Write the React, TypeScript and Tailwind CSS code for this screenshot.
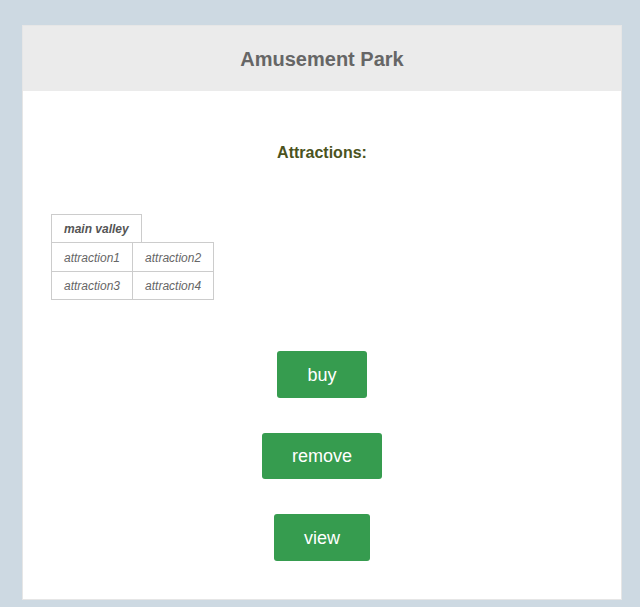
import React from "react";

export default function App() {
  const btn =
    "h-[47px] px-[30px] rounded-[3px] bg-[#369c4f] text-white text-[18px] leading-none flex items-center justify-center";
  return (
    <div
      className="min-h-[607px] w-[640px] bg-[#cdd9e2] pt-[25px] pl-[22px]"
      style={{ fontFamily: '"Liberation Sans", Arial, sans-serif' }}
    >
      <div className="w-[600px] h-[575px] border border-[#e6e6e6] bg-white flex flex-col">
        <div className="h-[65px] bg-[#ebebeb] flex items-center justify-center">
          <h1 className="text-[20px] font-bold text-[#666666]">Amusement Park</h1>
        </div>
        <div className="flex flex-col">
          <h2 className="mt-[53px] h-[18px] leading-[18px] text-center text-[16px] font-bold text-[#4b5320]">
            Attractions:
          </h2>
          <div className="mt-[52px] ml-[28px] flex flex-col items-start text-[12px] italic text-[#666666]">
            <div className="h-[28px] px-3 flex items-center border border-b-0 border-[#cccccc] font-bold text-[#555555]">
              main valley
            </div>
            <div className="grid grid-cols-[auto_auto] border-t border-l border-[#cccccc]">
              <div className="h-[29px] pt-px px-3 flex items-center border-r border-b border-[#cccccc]">attraction1</div>
              <div className="h-[29px] pt-px px-3 flex items-center border-r border-b border-[#cccccc]">attraction2</div>
              <div className="h-[28px] px-3 flex items-center border-r border-b border-[#cccccc]">attraction3</div>
              <div className="h-[28px] px-3 flex items-center border-r border-b border-[#cccccc]">attraction4</div>
            </div>
          </div>
          <div className="flex flex-col items-center mt-[51px]">
            <button className={btn}>buy</button>
            <button className={btn + " mt-[35px] !h-[46px]"}>remove</button>
            <button className={btn + " mt-[35px]"}>view</button>
          </div>
        </div>
      </div>
    </div>
  );
}
